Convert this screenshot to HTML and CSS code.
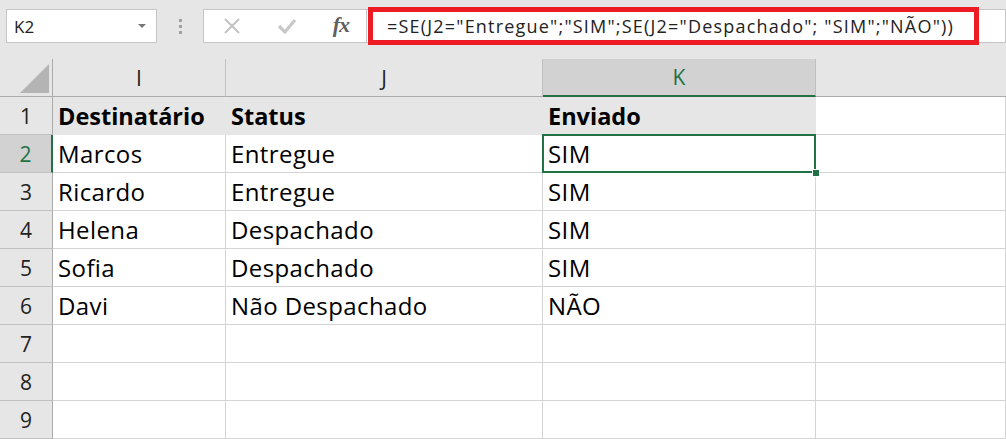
FILE: index.html
```html
<!DOCTYPE html>
<html lang="pt">
<head>
    <meta charset="UTF-8">
    <title>Planilha - SE aninhado</title>
    <link rel="stylesheet" href="styles.css">
</head>
<body>

    <div class="topbar">
        <div class="namebox">
            <span>K2</span>
            <span class="caret"></span>
        </div>
        <div class="grip"><i></i><i></i><i></i></div>
        <div class="fnbox">
            <svg width="20" height="20" viewBox="0 0 20 20"><path d="M3 3 L17 17 M17 3 L3 17" stroke="#c3c3c3" stroke-width="2" fill="none"/></svg>
            <svg width="22" height="20" viewBox="0 0 22 20"><path d="M3 10 L9 16 L19 4" stroke="#c8c8c8" stroke-width="3.2" fill="none"/></svg>
            <span class="fx">fx</span>
        </div>
        <div class="formula">
            <div class="mark">=SE(J2="Entregue";"SIM";SE(J2="Despachado"; "SIM";"NÃO"))</div>
        </div>
    </div>

    <div class="sheet">
        <div class="corner"><span class="tri"></span></div>
        <div class="colhead">I</div>
        <div class="colhead">J</div>
        <div class="colhead active">K</div>
        <div class="colhead last"></div>

        <div class="rowhead">1</div>
        <div class="cell fill bold">Destinatário</div>
        <div class="cell fill bold">Status</div>
        <div class="cell fill bold">Enviado</div>
        <div class="cell"></div>

        <div class="rowhead active">2</div>
        <div class="cell">Marcos</div>
        <div class="cell">Entregue</div>
        <div class="cell selected">SIM</div>
        <div class="cell"></div>

        <div class="rowhead">3</div>
        <div class="cell">Ricardo</div>
        <div class="cell">Entregue</div>
        <div class="cell">SIM</div>
        <div class="cell"></div>

        <div class="rowhead">4</div>
        <div class="cell">Helena</div>
        <div class="cell">Despachado</div>
        <div class="cell">SIM</div>
        <div class="cell"></div>

        <div class="rowhead">5</div>
        <div class="cell">Sofia</div>
        <div class="cell">Despachado</div>
        <div class="cell">SIM</div>
        <div class="cell"></div>

        <div class="rowhead">6</div>
        <div class="cell">Davi</div>
        <div class="cell">Não Despachado</div>
        <div class="cell">NÃO</div>
        <div class="cell"></div>

        <div class="rowhead">7</div>
        <div class="cell"></div>
        <div class="cell"></div>
        <div class="cell"></div>
        <div class="cell"></div>

        <div class="rowhead">8</div>
        <div class="cell"></div>
        <div class="cell"></div>
        <div class="cell"></div>
        <div class="cell"></div>

        <div class="rowhead">9</div>
        <div class="cell"></div>
        <div class="cell"></div>
        <div class="cell"></div>
        <div class="cell"></div>
    </div>

</body>
</html>
```

FILE: styles.css
```css
* { box-sizing: border-box; }
body {
    margin: 0;
    background: #fff;
    font-family: "Open Sans", "Noto Sans", sans-serif;
    overflow: hidden;
}

/* formula bar */
.topbar {
    height: 59px;
    background: #e6e6e6;
    display: flex;
    align-items: flex-start;
    padding: 9px 0 0 6px;
}
.namebox {
    width: 151px;
    height: 34px;
    background: #fff;
    border: 1px solid #c6c6c6;
    display: flex;
    align-items: center;
    justify-content: space-between;
    padding: 0 10px 0 7px;
    font-size: 17px;
    color: #222;
}
.caret {
    width: 0;
    height: 0;
    border-left: 4px solid transparent;
    border-right: 4px solid transparent;
    border-top: 4px solid #777;
}
.grip {
    width: 46px;
    height: 34px;
    display: flex;
    flex-direction: column;
    align-items: center;
    justify-content: center;
    gap: 3px;
}
.grip i {
    width: 3px;
    height: 3px;
    background: #a0a0a0;
}
.fnbox {
    width: 164px;
    height: 34px;
    background: #fff;
    border: 1px solid #c6c6c6;
    display: flex;
    align-items: center;
    justify-content: space-between;
    padding: 0 17px 0 18px;
}
.fx {
    font-family: "Liberation Serif", serif;
    font-style: italic;
    font-weight: bold;
    font-size: 22px;
    color: #606060;
    letter-spacing: -1px;
    margin-top: -2px;
}
.formula {
    flex: 1;
    height: 34px;
    background: #fff;
    border: 1px solid #c6c6c6;
    border-left: none;
    padding-left: 1px;
}
/* red highlight around the formula */
.mark {
    width: 611px;
    height: 38px;
    margin-top: -3px;
    border: 5px solid #ed1c24;
    padding-left: 14px;
    font-size: 18px;
    letter-spacing: 1.2px;
    line-height: 28px;
    color: #222;
    white-space: nowrap;
}

/* grid */
.sheet {
    display: grid;
    grid-template-columns: 53px 173px 317px 273px 1fr;
    grid-auto-rows: 38px;
}
.corner {
    background: #e6e6e6;
    border-right: 1px solid #ababab;
    border-bottom: 1px solid #ababab;
    display: flex;
    align-items: flex-end;
    justify-content: flex-end;
    padding: 0 3px 3px 0;
}
.tri {
    width: 0;
    height: 0;
    border-left: 29px solid transparent;
    border-bottom: 29px solid #b4b4b4;
}
.colhead {
    background: #e6e6e6;
    border-right: 1px solid #c0c0c0;
    border-bottom: 1px solid #ababab;
    display: flex;
    align-items: center;
    justify-content: center;
    font-size: 21px;
    color: #222;
}
.colhead.active {
    background: #d2d2d2;
    color: #217346;
    border-bottom: 2px solid #217346;
}
.colhead.last { border-right: none; }
.rowhead {
    background: #e6e6e6;
    border-right: 1px solid #ababab;
    border-bottom: 1px solid #c0c0c0;
    display: flex;
    align-items: center;
    justify-content: center;
    font-size: 21px;
    color: #222;
}
.rowhead.active {
    background: #d2d2d2;
    color: #217346;
    border-right: 2px solid #217346;
}
.cell {
    border-right: 1px solid #d4d4d4;
    border-bottom: 1px solid #d4d4d4;
    padding: 3px 0 0 5px;
    font-size: 24px;
    letter-spacing: 0.4px;
    line-height: 32px;
    color: #000;
    white-space: nowrap;
}
.cell.fill {
    background: #e7e6e6;
    border-color: #e7e6e6;
}
.bold {
    font-weight: bold;
    font-size: 23.5px;
    letter-spacing: 0;
}
.cell.selected { position: relative; }
.cell.selected::after {
    content: "";
    position: absolute;
    top: -1px;
    left: -1px;
    right: -1px;
    bottom: -1px;
    border: 2px solid #217346;
}
/* fill handle */
.cell.selected::before {
    content: "";
    position: absolute;
    right: -5px;
    bottom: -5px;
    width: 6px;
    height: 6px;
    background: #217346;
    border: 1px solid #fff;
    z-index: 1;
}
```
